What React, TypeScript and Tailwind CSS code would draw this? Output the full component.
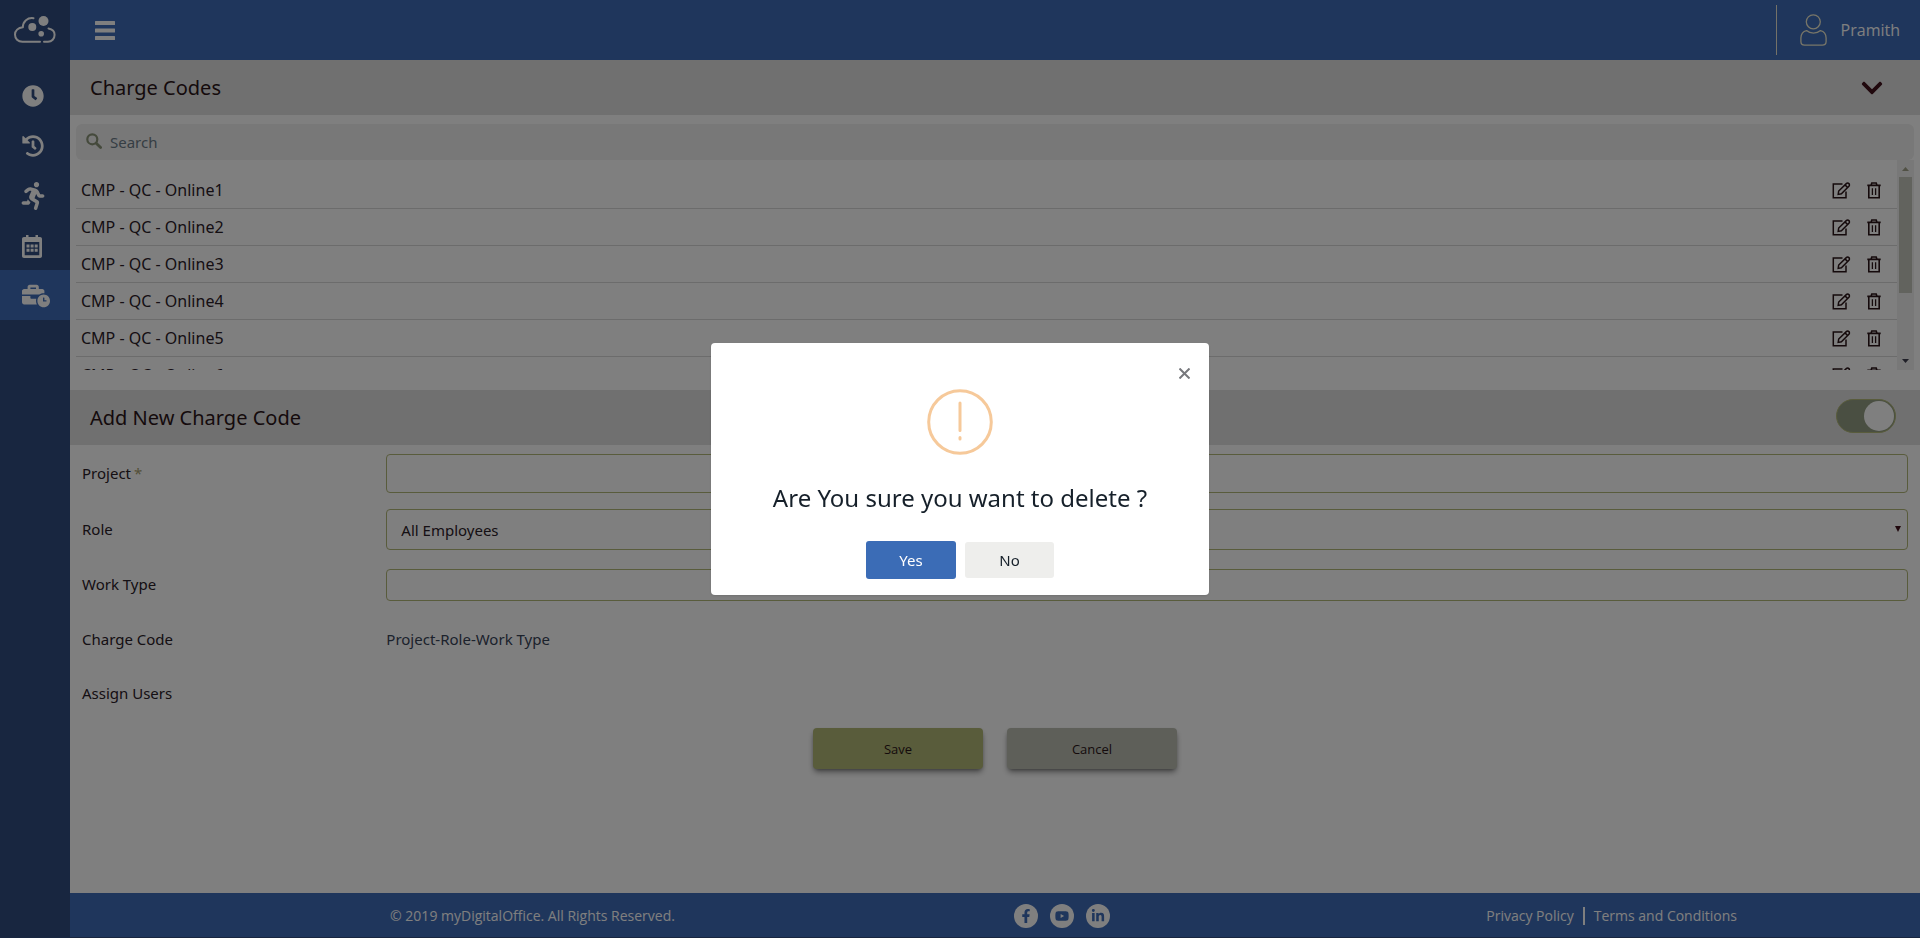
import React, { useState } from 'react';
import {
  FaBusinessTime,
  FaChevronDown,
  FaClock,
  FaFacebookF,
  FaHistory,
  FaLinkedinIn,
  FaRunning,
  FaYoutube,
} from 'react-icons/fa';

const chargeCodes = [1, 2, 3, 4, 5, 6].map((n) => `CMP - QC - Online${n}`);

function CloudLogo() {
  return (
    <svg viewBox="0 0 42 28" className="h-7 w-[42px]" fill="none" stroke="#fff" strokeWidth="2" strokeLinecap="round">
      <path d="M19.5 2.2C13.5 1.4 9 5.2 8.8 11.2C4 11.6 1 14.8 1 18.4C1 22.6 4 25.8 8.4 25.8H26" />
      <path d="M34.5 12.4C38.2 13 40.6 15.6 40.6 18.8C40.6 22.8 37.8 25.8 34 25.8H30" />
      <circle cx="18.3" cy="11" r="4" fill="#fff" stroke="none" />
      <circle cx="29.5" cy="5" r="5" fill="#fff" stroke="none" />
      <circle cx="27.2" cy="17.8" r="2.8" fill="#fff" stroke="none" />
    </svg>
  );
}

function CalendarIcon() {
  return (
    <svg viewBox="0 0 20 23" className="h-[23px] w-5" fill="#fff">
      <path
        fillRule="evenodd"
        d="M4 0H6.5V2H13.5V0H16V2H18C19.2 2 20 2.8 20 4V21C20 22.2 19.2 23 18 23H2C.8 23 0 22.2 0 21V4C0 2.8.8 2 2 2H4ZM2.7 7V20.3H17.3V7Z"
      />
      <path d="M4.5 9.5H7.5V12.5H4.5ZM8.6 9.5H11.6V12.5H8.6ZM12.7 9.5H15.7V12.5H12.7ZM4.5 13.7H7.5V16.7H4.5ZM8.6 13.7H11.6V16.7H8.6ZM12.7 13.7H15.7V16.7H12.7Z" />
    </svg>
  );
}

function MenuIcon() {
  return (
    <svg viewBox="0 0 20 20" className="size-5" fill="#fff">
      <rect y="1" width="20" height="4" rx=".5" />
      <rect y="8.5" width="20" height="4" rx=".5" />
      <rect y="16" width="20" height="4" rx=".5" />
    </svg>
  );
}

function SearchIcon() {
  return (
    <svg viewBox="0 0 16 18" className="h-[18px] w-4" fill="none" stroke="#8a9478">
      <circle cx="6.3" cy="6.3" r="5" strokeWidth="2.2" />
      <path d="M10.2 10.2L14.6 14.6" strokeWidth="2.8" strokeLinecap="round" />
    </svg>
  );
}

function UserIcon() {
  return (
    <svg viewBox="0 0 27 32" className="h-8 w-[27px]" fill="none" stroke="#f0ecd0" strokeWidth="1.3">
      <circle cx="13.3" cy="7.8" r="7" />
      <path d="M6.5 16.6C3 17.4 1 20 .9 24V27.5C.9 29.8 2.4 31.2 4.6 31.2H22.2C24.6 31.2 26.1 29.8 26.1 27.5V24C26 20 24 17.4 20.5 16.6C18.5 18.4 16 19.2 13.5 19.2C11 19.2 8.5 18.4 6.5 16.6Z" />
    </svg>
  );
}

function EditIcon() {
  return (
    <svg viewBox="0 0 19 17" className="h-[17px] w-[19px]" fill="none" stroke="#2b1518" strokeWidth="1.5">
      <path d="M10.5 1.9H1.3V15.8H14V9.5" />
      <path d="M6.2 12.4L6.7 9L14.3 1.6C15 .9 16.2.9 16.9 1.6C17.6 2.3 17.6 3.5 16.9 4.2L9.4 11.8Z" />
      <path d="M13 2.9L15.6 5.5" />
    </svg>
  );
}

function TrashIcon() {
  return (
    <svg viewBox="0 0 14 17" className="h-[17px] w-[14px]" fill="none" stroke="#2b1518" strokeWidth="1.6">
      <path d="M.3 3.4H13.7M4 3.2L4.8 1H9.2L10 3.2M1.8 3.4V15.8H12.2V3.4" />
      <path d="M5.4 6.3V13M8.6 6.3V13" strokeWidth="1.3" />
    </svg>
  );
}

const navItems = [
  { label: 'Time sheet', icon: <FaClock className="size-[22px]" />, active: false },
  { label: 'History', icon: <FaHistory className="size-[22px]" />, active: false },
  { label: 'Activities', icon: <FaRunning className="-ml-[3px] size-7" />, active: false },
  { label: 'Calendar', icon: <CalendarIcon />, active: false },
  { label: 'Charge codes', icon: <FaBusinessTime className="size-7" />, active: true },
];

function SectionHeader({ title, children }: { title: string; children: React.ReactNode }) {
  return (
    <div className="flex h-[55px] items-center justify-between bg-[#e0e0e0] pl-5 pr-6">
      <h2 className="text-xl text-[#2b1518]">{title}</h2>
      {children}
    </div>
  );
}

function FormRow({ label, htmlFor, required, children }: {
  label: string;
  htmlFor?: string;
  required?: boolean;
  children?: React.ReactNode;
}) {
  return (
    <div className="grid grid-cols-[1fr_5fr] items-center">
      <label htmlFor={htmlFor} className="pb-[2px] pl-3">
        {label}
        {required && <span className="pl-[3px] text-[#a8a070]">*</span>}
      </label>
      <div className="flex pl-2 pr-3">{children}</div>
    </div>
  );
}

export default function App() {
  const [open, setOpen] = useState(true);

  return (
    <div className="flex min-h-screen bg-white font-['Noto_Sans',sans-serif] text-[15px] leading-6 text-[#2b2028]">
      <aside className="flex w-[70px] shrink-0 flex-col bg-[#304c80]">
        <div className="flex h-[60px] items-center pl-[14px]">
          <CloudLogo />
        </div>
        <nav className="flex flex-col pt-[10px] text-white">
          {navItems.map((item) => (
            <a
              key={item.label}
              href="#"
              aria-label={item.label}
              className={`flex h-[50px] items-center pl-[22px] pt-[2px] ${item.active ? 'bg-[#3e6cb8]' : ''}`}
            >
              {item.icon}
            </a>
          ))}
        </nav>
      </aside>

      <div className="flex min-w-0 grow flex-col">
        <header className="flex h-[60px] items-center justify-between bg-[#3e6cb8] pl-[25px] pr-5 text-white">
          <button type="button" aria-label="Toggle menu">
            <MenuIcon />
          </button>
          <div className="flex h-[50px] items-center border-l border-[#e8e4d0] pl-[23px] font-['Open_Sans',sans-serif] text-base">
            <UserIcon />
            <span className="pl-[14px]">Pramith</span>
          </div>
        </header>

        <main className="grow">
          <SectionHeader title="Charge Codes">
            <button type="button" aria-label="Collapse" className="pr-3">
              <FaChevronDown className="size-6 text-[#40101a]" />
            </button>
          </SectionHeader>

          <div className="px-[6px] pt-[9px]">
            <div className="flex h-9 items-center gap-2 rounded-md bg-[#f0f0f0] px-[10px]">
              <SearchIcon />
              <input
                type="text"
                aria-label="Search"
                placeholder="Search"
                className="grow bg-transparent outline-none placeholder:text-[#6c7c88]"
              />
            </div>

            <div className="flex h-[210px]">
              <ul className="grow overflow-hidden pt-3">
                {chargeCodes.map((code) => (
                  <li
                    key={code}
                    className="flex h-[37px] items-center justify-between border-b border-[#d8d8d8] pl-[5px] pr-4"
                  >
                    <span className="text-base leading-6">{code}</span>
                    <span className="flex items-center gap-4">
                      <button type="button" aria-label={`Edit ${code}`}>
                        <EditIcon />
                      </button>
                      <button type="button" aria-label={`Delete ${code}`} onClick={() => setOpen(true)}>
                        <TrashIcon />
                      </button>
                    </span>
                  </li>
                ))}
              </ul>
              <div className="flex w-[17px] shrink-0 flex-col items-center bg-[#f1f1f1]">
                <svg viewBox="0 0 17 17" className="size-[17px]">
                  <path d="M5 11L8.5 7L12 11Z" fill="#a3a38a" />
                </svg>
                <div className="h-[116px] w-[13px] bg-[#c4c6bc]" />
                <div className="grow" />
                <svg viewBox="0 0 17 17" className="size-[17px]">
                  <path d="M5 6L8.5 10L12 6Z" fill="#404050" />
                </svg>
              </div>
            </div>
          </div>

          <div className="pt-5">
            <SectionHeader title="Add New Charge Code">
              <div className="pb-[3px]">
                <label className="flex h-[34px] w-[60px] items-center justify-end rounded-full border border-[#b2b878] bg-[#959f84] p-[1px]">
                  <input type="checkbox" defaultChecked aria-label="Enable charge code" className="sr-only" />
                  <span className="size-[30px] rounded-full bg-white" />
                </label>
              </div>
            </SectionHeader>
          </div>

          <form className="pt-[9px]" onSubmit={(e) => e.preventDefault()}>
            <FormRow label="Project" htmlFor="project" required>
              <input id="project" className="h-[39px] grow rounded border border-[#b2b878] px-[14px]" />
            </FormRow>
            <div className="pt-4">
              <FormRow label="Role" htmlFor="role">
                <div className="relative flex grow">
                  <select id="role" className="h-[41px] grow appearance-none rounded border border-[#b2b878] px-[14px]">
                    <option>All Employees</option>
                  </select>
                  <svg viewBox="0 0 6 6" className="pointer-events-none absolute right-[7px] top-[17px] size-[6px]">
                    <path d="M0 0H6L3 6Z" fill="#40101a" />
                  </svg>
                </div>
              </FormRow>
            </div>
            <div className="pt-[19px]">
              <FormRow label="Work Type" htmlFor="work-type">
                <input id="work-type" className="h-8 grow rounded border border-[#b2b878] px-[14px]" />
              </FormRow>
            </div>
            <div className="pt-[26px]">
              <FormRow label="Charge Code">
                <output className="pb-[2px] text-[#384458]">Project-Role-Work Type</output>
              </FormRow>
            </div>
            <div className="pt-7">
              <FormRow label="Assign Users" />
            </div>
            <div className="flex justify-center gap-6 pb-6 pt-[21px] font-['Open_Sans',sans-serif] text-[13px] text-[#2b1518]">
              <button type="submit" className="h-[41px] w-[170px] rounded bg-[#b2b876] shadow-md shadow-black/40">
                Save
              </button>
              <button type="button" className="h-[41px] w-[170px] rounded bg-[#bcbfb2] shadow-md shadow-black/40">
                Cancel
              </button>
            </div>
          </form>
        </main>

        <footer className="grid h-[45px] grid-cols-12 items-center border-b border-[#304c80] bg-[#3e6cb8] pt-px font-['Open_Sans',sans-serif] text-sm text-white">
          <p className="col-span-6 text-center">© 2019 myDigitalOffice. All Rights Reserved.</p>
          <div className="col-span-2 flex gap-3 pl-[19px] text-[#3e6cb8]">
            <a href="#" aria-label="Facebook" className="flex size-6 items-center justify-center rounded-full bg-white">
              <FaFacebookF className="size-[14px]" />
            </a>
            <a href="#" aria-label="YouTube" className="flex size-6 items-center justify-center rounded-full bg-white">
              <FaYoutube className="size-[14px]" />
            </a>
            <a href="#" aria-label="LinkedIn" className="flex size-6 items-center justify-center rounded-full bg-white">
              <FaLinkedinIn className="size-[14px]" />
            </a>
          </div>
          <div className="col-span-4 flex items-center justify-center gap-[9px]">
            <a href="#">Privacy Policy</a>
            <span className="h-[18px] w-[2px] bg-white" />
            <a href="#">Terms and Conditions</a>
          </div>
        </footer>
      </div>

      {open && (
        <div className="fixed inset-0 flex items-center justify-center bg-black/50">
          <div
            role="dialog"
            aria-modal="true"
            aria-labelledby="confirm-title"
            className="relative flex w-[498px] flex-col items-center rounded bg-white pb-4 pt-[46px] shadow"
          >
            <button
              type="button"
              aria-label="Close"
              onClick={() => setOpen(false)}
              className="absolute right-[18px] top-6 p-px"
            >
              <svg viewBox="0 0 11 11" className="size-[11px]" stroke="#77787c" strokeWidth="2">
                <path d="M.5.5L10.5 10.5M10.5.5L.5 10.5" />
              </svg>
            </button>
            <svg viewBox="0 0 66 66" className="size-[66px]" fill="none" stroke="#f6c99a" strokeWidth="3" strokeLinecap="round">
              <circle cx="33" cy="33" r="31.3" />
              <path d="M33 14V41.5M33 48.5V50" />
            </svg>
            <h3 id="confirm-title" className="pt-[25px] text-2xl leading-9 text-[#16202a]">
              Are You sure you want to delete ?
            </h3>
            <div className="flex items-center gap-[9px] pt-[25px]">
              <button type="button" onClick={() => setOpen(false)} className="h-[38px] w-[90px] rounded-[3px] bg-[#3b6cb6] text-white">
                Yes
              </button>
              <button type="button" onClick={() => setOpen(false)} className="h-9 w-[89px] rounded-[3px] bg-[#eeeeec] text-[#16202a]">
                No
              </button>
            </div>
          </div>
        </div>
      )}
    </div>
  );
}
